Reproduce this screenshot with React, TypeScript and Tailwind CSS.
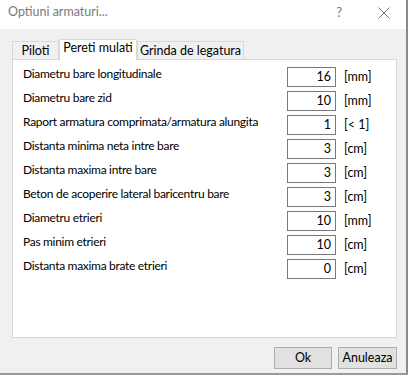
import { useState } from 'react';

const rows = [
  { label: 'Diametru bare longitudinale', value: '16', unit: '[mm]' },
  { label: 'Diametru bare zid', value: '10', unit: '[mm]' },
  { label: 'Raport armatura comprimata/armatura alungita', value: '1', unit: '[< 1]' },
  { label: 'Distanta minima neta intre bare', value: '3', unit: '[cm]' },
  { label: 'Distanta maxima intre bare', value: '3', unit: '[cm]' },
  { label: 'Beton de acoperire lateral baricentru bare', value: '3', unit: '[cm]' },
  { label: 'Diametru etrieri', value: '10', unit: '[mm]' },
  { label: 'Pas minim etrieri', value: '10', unit: '[cm]' },
  { label: 'Distanta maxima brate etrieri', value: '0', unit: '[cm]' },
];

const tabs = [
  { name: 'Piloti', w: 'w-[47px]' },
  { name: 'Pereti mulati', w: 'w-[78px]' },
  { name: 'Grinda de legatura', w: 'w-[107px]' },
];

export default function App() {
  const [active, setActive] = useState(1);

  return (
    <div className="w-[408px] h-[375px] flex flex-col overflow-hidden font-['Lato',sans-serif] text-[12px] text-black bg-white">
      <div className="flex flex-1 min-h-0">
        <div className="flex-1 flex flex-col">
          {/* Title bar */}
          <div className="h-[29px] bg-white flex items-center pl-[8px] shrink-0">
            <span className="text-[#7a7a7a] text-[12.5px] leading-none -mt-[4px]">Optiuni armaturi...</span>
            <span className="ml-auto text-[#7a7a7a] text-[13px] leading-none -mt-[4px] mr-[36px]">?</span>
            <svg width="12" height="12" viewBox="0 0 12 12" className="mr-[16px] -mt-[4px]">
              <path d="M0.5 0.5 L11.5 11.5 M11.5 0.5 L0.5 11.5" stroke="#6f6f6f" strokeWidth="1" fill="none" />
            </svg>
          </div>

          {/* Body */}
          <div className="flex-1 bg-[#f0f0f0] pl-[12px] pr-[9px] pt-[9px] flex flex-col">
            {/* Tabs */}
            <div className="flex items-end h-[21px] relative z-10">
              {tabs.map((t, i) =>
                i === active ? (
                  <button
                    key={t.name}
                    onClick={() => setActive(i)}
                    className={`${t.w} h-[21px] -mb-[1px] bg-white border border-b-0 border-[#d9d9d9] flex justify-center items-center pb-[4px] leading-none text-[12.5px] whitespace-nowrap`}
                  >
                    {t.name}
                  </button>
                ) : (
                  <button
                    key={t.name}
                    onClick={() => setActive(i)}
                    className={`${t.w} h-[18px] bg-[#f0f0f0] border border-b-0 border-[#d9d9d9] flex justify-center items-center pt-[1px] leading-none text-[12.5px] whitespace-nowrap`}
                  >
                    {t.name}
                  </button>
                )
              )}
            </div>

            {/* Panel */}
            <div className="h-[279px] bg-white border border-[#d9d9d9] pl-[10px] pt-[5px] flex flex-col">
              {rows.map((r) => (
                <div key={r.label} className="flex items-center h-[24px]">
                  <span className="w-[264px] pb-[6px] text-[12px] leading-none whitespace-nowrap tracking-[-0.3px]">{r.label}</span>
                  <div className="w-[49px] h-[20px] border border-[#7a7a7a] bg-white flex items-center justify-end pr-[4px] leading-none text-[12.5px]">
                    {r.value}
                  </div>
                  <span className="ml-[8px] leading-none text-[12.5px]">{r.unit}</span>
                </div>
              ))}
            </div>

            {/* Buttons */}
            <div className="flex justify-end gap-[6px] mt-[9px]">
              <button className="w-[58px] h-[22px] bg-[#e1e1e1] border border-[#adadad] leading-none text-[12.5px]">Ok</button>
              <button className="w-[59px] h-[22px] bg-[#e1e1e1] border border-[#adadad] leading-none text-[12.5px]">Anuleaza</button>
            </div>
          </div>
        </div>
        <div className="w-[2px] bg-[#8a8a8a] shrink-0" />
      </div>
      <div className="h-[2px] bg-[#9a9a9a] shrink-0" />
    </div>
  );
}
